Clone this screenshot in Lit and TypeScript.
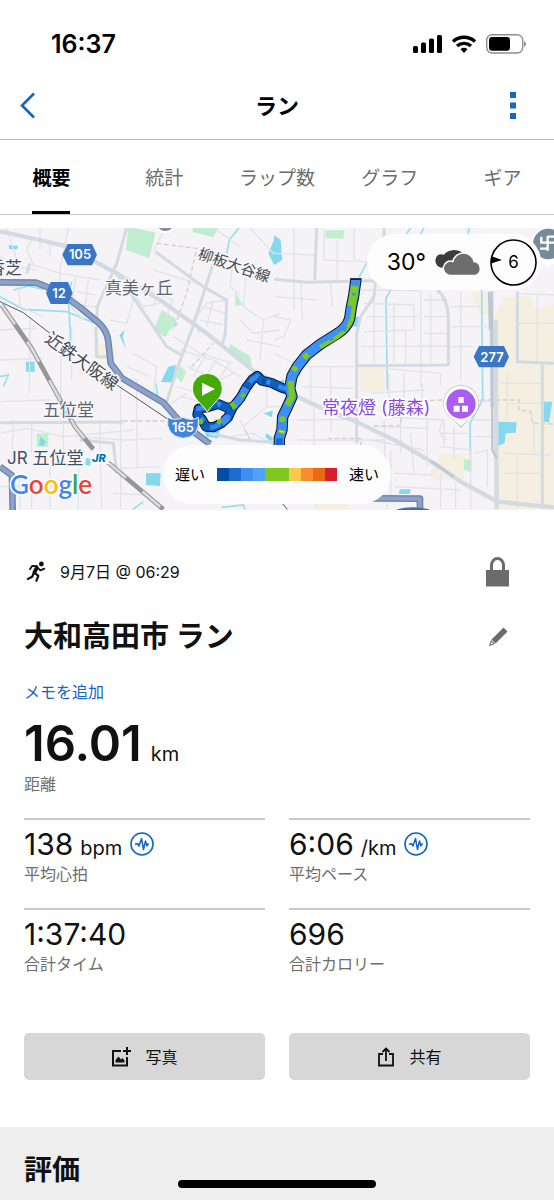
import { LitElement, html, css, svg } from "lit";
import { customElement, property, state } from "lit/decorators.js";

interface Metric {
  value: string;
  unit: string;
  label: string;
  pulse: boolean;
}

const METRICS: Metric[] = [
  { value: "138", unit: "bpm", label: "平均心拍", pulse: true },
  { value: "6:06", unit: "/km", label: "平均ペース", pulse: true },
  { value: "1:37:40", unit: "", label: "合計タイム", pulse: false },
  { value: "696", unit: "", label: "合計カロリー", pulse: false },
];

const TABS = ["概要", "統計", "ラップ数", "グラフ", "ギア"];

const PACE_COLORS = [
  "#034ea2", "#1a6cd3", "#3f8fef", "#4fa0ff", "#7fc81e",
  "#7fc81e", "#fdc84b", "#f98c2b", "#ea6a12", "#d81e2a",
];

const NORTH_ROUTE =
  "M1068 178L1061 228L1054 262L1049 296Q1040 325 1010 342L962 372L920 404L892 440L876 468L869 505L876 530L860 565L848 590L846 630L838 655L838 684";
const WEST_ROUTE =
  "M867 510L845 503L815 489L785 482L772 468L757 478L738 504L722 533L700 560L684 564L655 552L620 562L596 566L592 584L606 598L618 620L640 622L664 610L684 592L698 562";

@customElement("course-map")
export class CourseMap extends LitElement {
  static styles = css`
    :host { display: block; height: 282px; overflow: hidden; }
    .map { display: block; width: 100%; height: 100%; background: #f5f3f6; }
    text { font-family: "Inter", "Noto Sans CJK JP", sans-serif; }
    .minor { fill: none; stroke: #e0e3ea; stroke-width: 4; }
    .road { fill: none; stroke: #d3dae2; stroke-width: 9; stroke-linejoin: round; }
    .wide { stroke-width: 13; }
    .trunk-edge { fill: none; stroke: #6c83ad; stroke-width: 20; stroke-linejoin: round; }
    .trunk { fill: none; stroke: #8da2c8; stroke-width: 12; stroke-linejoin: round; }
    .park { fill: #c0ecd0; }
    .water { fill: #87d8ed; }
    .stream { fill: none; stroke: #9adfee; stroke-width: 5; }
    .sand { fill: #f5efe1; }
    .dash { fill: none; stroke: #d0cfd2; stroke-width: 4; stroke-dasharray: 14 8; }
    .rail { fill: none; stroke: #969698; stroke-width: 14; }
    .rail-gap { fill: none; stroke: #dcdcdf; stroke-width: 8; stroke-dasharray: 70 64; }
    .line { fill: none; stroke: #56565a; stroke-width: 3; }
    .route-edge { fill: none; stroke: #061426; stroke-width: 34; stroke-linejoin: round; }
    .route { fill: none; stroke: #3f90f4; stroke-width: 28; stroke-linejoin: round; }
    .thin-edge { stroke-width: 30; }
    .deep { stroke: #0d5fbd; stroke-width: 24; }
    .bright { stroke: #3f90f4; stroke-width: 22; }
    .fleck { fill: none; stroke-width: 14; }
    .name { font-size: 17px; fill: #5c6670; stroke: #f7f6f9; stroke-width: 3px; paint-order: stroke; }
    .rail-name { fill: #45494f; }
    .small { font-size: 15px; }
    .station { fill: #3d5166; }
    .shield { font-size: 13px; font-weight: 600; fill: #fff; text-anchor: middle; }
    .spot { font-size: 18px; fill: #8a4bdc; stroke: #fff; stroke-width: 3px; paint-order: stroke; }
    .logo { font-family: "Lato", sans-serif; font-size: 26px; font-weight: 600; stroke: #fff; stroke-width: 3px; paint-order: stroke; }
    .jr { font-size: 11px; font-weight: 800; font-style: italic; fill: #0073bd; stroke: #fff; stroke-width: 4px; paint-order: stroke; }
  `;

  private west() {
    return svg`
      <path class="sand" d="M285 370L350 375L350 415L300 418ZM232 440L330 448L330 462L232 466Z" />
      <path class="park" d="M385 20L466 38L448 115L378 90ZM578 22L655 22L640 52L578 36ZM486 270L525 295L535 315L508 330L496 352L462 326ZM690 372L752 410L755 445L686 402ZM706 216L728 255L706 258ZM540 438L558 455L545 488L528 470ZM110 642L145 640L145 680L110 680Z" />
      <path class="water" d="M505 440L528 435L520 487L483 486ZM25 76L55 78L50 88L28 88ZM78 425L104 425L104 455L78 455ZM375 330L368 350L378 388L358 345ZM438 760L482 760L480 798L438 795ZM615 632L660 628L655 655L618 650ZM122 650L138 665L130 678L116 676ZM805 100L822 60L822 135ZM790 580L818 572L816 592ZM800 640L820 655L812 666L796 650ZM258 714L275 716L270 738L256 734Z" />
      <path class="stream" d="M0 230L70 268L200 275L290 312M215 185L205 225L212 370M40 210L85 198L130 208M718 22L688 60L680 100M0 470L25 465L10 500M398 868L430 846M665 862L730 855L735 868M468 490L474 545" />
      <path class="minor" d="M95 60L80 90L100 135L180 160L300 180M205 24L180 150L180 210M110 60L215 90L300 130M120 24L120 90M150 70L150 110M20 24L60 150M0 110L50 140L110 150M55 185L60 260L130 290M228 170L214 260L250 300M230 215L285 225M240 255L290 262M265 180L250 300M0 330L110 325M90 290L88 520M182 400L182 600M0 420L130 415M0 545L150 540M215 320L215 480M362 500L362 868M300 480L410 480L410 640M0 640L80 625L190 650L400 630M40 600L35 740M95 610L95 700M190 610L190 690M300 600L300 690M225 650L380 660L490 655M300 690L305 868M360 745L480 740M340 820L440 825M235 745L235 868M95 800L95 868M150 740L150 868M60 760L60 868M0 800L240 800M410 600L412 745M460 90L500 20M460 150L590 190M420 200L520 240M350 150L430 260L480 250M400 240L380 310L330 300M480 200L460 260M520 240L495 300M590 100L680 130M700 120L690 200L720 225M740 150L730 260L790 300L840 280M650 30L720 80M750 24L830 110M520 350L600 400L700 430M540 390L640 420L720 470M560 440L660 480L700 460M580 470L620 400M610 480L650 420M640 500L690 430M530 500L600 520L590 560M500 560L560 520M545 530L620 550M400 400L470 440L460 520M380 440L450 470M600 340L580 300L620 250L680 240M610 260L680 280M600 300L670 315M640 240L620 320M720 300L760 340L840 330M740 360L840 380M790 300L780 420M720 600L750 660M690 650L760 640L830 680M730 620L800 560M800 500L800 560L840 560" />
      <path class="dash" d="M470 70L590 85L560 220L520 330M575 440L640 370M370 603L510 603M735 630L750 660" />
      <path class="road" d="M380 24L350 130L292 260L290 310M466 95L610 200L680 240L676 340L665 380M640 130L575 330L530 450L497 555M350 160L440 290L500 380L545 405M80 160L90 130M0 608L370 606M630 640L720 660L840 668M288 320L290 410L330 410M240 660L340 670L350 760" />
      <path class="road wide" d="M0 34L200 78L350 160L480 240L620 340L770 460L840 490" />
      <path class="trunk-edge" d="M0 187L108 188L175 214L240 262L292 305Q322 330 325 365L332 430L365 474L490 548L540 605L630 672M0 740L36 766L38 870" />
      <path class="trunk" d="M0 187L108 188L175 214L240 262L292 305Q322 330 325 365L332 430L365 474L490 548L540 605L630 672M0 740L36 766L38 870" />
      <path class="line" d="M0 245L70 278L150 340M340 488L510 602" />
      <path class="rail" d="M5 255L95 385L150 485L225 620L280 688M325 728L490 868" />
      <path class="rail-gap" d="M5 255L95 385L150 485L225 620L280 688M325 728L490 868" />
    `;
  }

  private east() {
    return svg`
      <path class="sand" d="M655 300L690 235L770 225L780 270L840 250L840 868L670 868L670 700L655 640ZM590 220L650 220L650 290L620 280ZM255 445L332 442L332 515L258 515ZM500 700L575 705L570 780L480 780L465 760ZM120 825L220 830L225 868L120 868Z" />
      <path class="park" d="M155 32L212 30L208 56L155 55ZM570 718L592 720L590 758L570 748Z" />
      <path class="water" d="M0 45L20 60L25 120L0 135ZM228 290L255 290L250 320L228 318ZM672 605L728 607L725 638L695 640L692 670L672 678ZM810 545L835 545L825 608L806 604ZM378 808L410 808L408 822L374 822ZM0 485L30 480L30 500L0 500Z" />
      <path class="stream" d="M288 112L255 172M410 24L385 60M450 24L430 60M353 205L336 235L340 510M585 24L580 60M623 210L626 540L588 610L590 755" />
      <path class="minor" d="M60 24L60 270M0 100L120 105M0 230L130 240M0 290L50 300L30 350L0 360M80 180L85 300M170 190L175 260M150 24L150 120L240 125M190 60L190 180M240 24L240 120L290 130M0 400L60 430M100 440L240 440M110 440L110 540M170 440L172 640M85 500L240 505M70 600L240 598M70 660L330 660M120 560L120 680M260 210L440 212M270 250L420 255L420 330L270 335M300 210L300 430M360 250L360 430M395 330L395 430M440 210L440 500M280 290L430 290M450 240L520 240M450 290L520 290M450 340L520 340M260 380L520 378M470 220L470 430M560 215L560 480M530 260L620 260M530 320L640 320M530 380L600 380M445 490L445 600M330 445L500 460L500 490M345 460L345 560M390 460L390 540M290 520L450 510M330 590L510 600L510 680M380 580L380 700M300 620L460 625M290 660L450 690M330 600L335 760M410 640L420 760M460 580L460 740M500 640L590 640M500 680L590 690L590 868M540 620L540 720M350 690L350 840M280 700L280 830M360 760L480 765M360 800L560 810M500 760L500 868M545 790L545 868M600 540L660 545M600 600L660 600M600 650L660 650M600 700L640 690L640 800M690 700L830 705M690 760L800 760M730 700L730 868M780 600L780 700M700 550L800 550M680 490L800 490M730 220L840 225M790 220L790 430M730 310L840 310M640 420L660 420M700 460L700 600M510 600Q480 640 520 660M340 850L340 868M430 840L430 868" />
      <path class="dash" d="M380 545L505 540M620 540L735 540L735 570L770 575L775 610L840 612M300 617L380 617L380 580M160 655L260 655L260 680M15 570L60 555" />
      <path class="road" d="M128 24L122 180M0 178L100 187L305 182L300 230L260 290L248 340L248 670M250 437L523 435L523 290Q520 235 490 210M330 24L330 60M730 215L730 425L840 430M805 430L805 868M235 720L230 840" />
      <path class="road wide" d="M70 530L145 565L240 602L370 665L480 730L560 785L670 845L840 862M665 300L668 868M652 215L655 560" />
      <path class="line" d="M0 820L40 868" />
      <path fill="none" stroke="#bcc7d2" stroke-width="7" d="M653 215L655 690L668 715M645 215L648 330M470 722L540 770" />
      <path class="trunk-edge" d="M290 835L438 836L438 870" />
      <path class="trunk" d="M290 835L438 836L438 870" />
      <path fill="#4a68ad" d="M370 868Q415 856 465 868V872H370Z" />
    `;
  }

  private course() {
    return svg`
      <path class="route-edge thin-edge" d=${WEST_ROUTE} />
      <path class="route-edge" d=${NORTH_ROUTE} />
      <path class="route deep" d=${WEST_ROUTE} />
      <path class="fleck" stroke="#3488ee" stroke-dasharray="34 26 12 30" d=${WEST_ROUTE} />
      <path class="fleck" stroke="#0a4fa0" stroke-dasharray="10 66" d=${WEST_ROUTE} />
      <path class="route bright" d="M738 504L722 533L700 560M684 592L664 610" />
      <path class="fleck" stroke="#72c31f" d="M724 522L734 530M694 548L706 566M600 598L604 612M652 602L664 608" />
      <path class="route" d=${NORTH_ROUTE} />
      <path fill="none" stroke="#7fc81e" stroke-width="24" d="M1065 198L1058 240L1055 258" />
      <path fill="none" stroke="#7fc81e" stroke-width="12" d="M1061 256L1056 296Q1045 328 1014 350L960 382" />
      <path fill="none" stroke="#7fc81e" stroke-width="18" d="M924 402L912 414M888 440L880 452M872 482L876 530L862 556M848 590L846 606M846 630L842 640" />
      <path fill="none" stroke="#3f90f4" stroke-width="8" d="M1056 222L1066 224M1040 320L1030 334M1000 354L990 360" />
      <path fill="none" stroke="#fdc84b" stroke-width="4" d="M838 634L854 636" />
      <path fill="none" stroke="#1769cf" stroke-width="20" d="M838 655V684" />
      <path fill="none" stroke="#061426" stroke-width="5" d="M1051 177H1085" />
      <path d="M636 582L666 576L662 596L640 602Z" fill="#f7f2f0" />
      <path d="M622 576C604 548 577 536 577 505A45 45 0 0 1 667 505C667 536 640 548 622 576Z" fill="#46aa06" stroke="#fff" stroke-width="3" />
      <path d="M606 488L645 507L606 527Z" fill="#fff" />
    `;
  }

  private markers() {
    return svg`
      <path d="M203 72H276L291 104L276 136H203L187 104Z" fill="#3b76c6" />
      <path d="M152 186H204L218 219L204 252H152L138 219Z" fill="#3b76c6" />
      <path d="M1437 378H1512L1527 410L1512 442H1437L1421 410Z" fill="#3b76c6" />
      <path d="M503 592Q525 604 549 592Q572 604 595 592Q602 652 549 655Q496 648 503 592Z" fill="#4384d6" stroke="#e7eefa" stroke-width="3" />
      <circle cx="1642" cy="80" r="54" fill="#fff" />
      <path d="M1615 112L1642 142L1662 132V100Z" fill="#fff" />
      <circle cx="1645" cy="72" r="46" fill="#768b99" />
      <path d="M1624 50V68H1662M1643 48V92M1620 86H1643M1662 50H1643" fill="none" stroke="#fff" stroke-width="7" />
      <path d="M470 20A28 26 0 0 0 522 20Z" fill="#888d93" stroke="#fff" stroke-width="7" />
      <path d="M1383 624Q1370 607 1350 592A54 54 0 1 1 1416 592Q1396 607 1383 624Z" fill="#b3b3ba" opacity=".7" />
      <path d="M1383 619Q1370 604 1350 590A52 52 0 1 1 1416 590Q1396 604 1383 619Z" fill="#fff" />
      <circle cx="1383" cy="552" r="44" fill="#ab5cf5" />
      <path d="M1375 531H1391V549H1375ZM1361 557H1379V575H1361ZM1386 557H1404V575H1386Z" fill="#fff" />
    `;
  }

  render() {
    return html`
      <svg class="map" viewBox="0 0 554 282" preserveAspectRatio="xMidYMid slice" role="img" aria-label="ランのコース">
        <g transform="translate(0 -8) scale(.33333)">
          ${this.west()}
          <g transform="translate(822 0)">${this.east()}</g>
          ${this.course()} ${this.markers()}
        </g>
        <text class="shield" x="80" y="31">105</text>
        <text class="shield" x="59" y="70">12</text>
        <text class="shield" x="183" y="204">165</text>
        <text class="shield" x="492" y="134">277</text>
        <text class="name station" x="-12" y="46">香芝</text>
        <text class="name" x="105" y="66">真美ヶ丘</text>
        <text class="name" x="43" y="188">五位堂</text>
        <text class="name rail-name small" transform="translate(197 30) rotate(19)">柳板大谷線</text>
        <text class="name rail-name" transform="translate(44 113) rotate(36)">近鉄大阪線</text>
        <text class="name station" x="7" y="236">JR 五位堂</text>
        <text class="jr" x="92" y="234">JR</text>
        <text class="spot" x="322" y="186">常夜燈 (藤森)</text>
        <text class="logo" x="10" y="266"><tspan fill="#4285f4">G</tspan><tspan fill="#ea4335">o</tspan><tspan fill="#fbbc05">o</tspan><tspan fill="#4285f4">g</tspan><tspan fill="#34a853">l</tspan><tspan fill="#ea4335">e</tspan></text>
      </svg>
    `;
  }
}

@customElement("metric-cell")
export class MetricCell extends LitElement {
  @property({ attribute: false }) metric!: Metric;

  static styles = css`
    :host { display: block; border-top: 2px solid #c9c9c9; padding-top: 6px; min-height: 90px; }
    .figure { display: flex; align-items: center; gap: 8px; height: 36px; }
    .reading { display: flex; align-items: baseline; gap: 7px; }
    .value { font-size: 30px; line-height: 36px; color: #111; }
    .unit { font-size: 20px; line-height: 24px; }
    .label { font-size: 16px; line-height: 24px; color: #6e6e6e; }
    .pulse { width: 24px; height: 24px; fill: none; stroke: #1565c8; }
  `;

  render() {
    const m = this.metric;
    return html`
      <div class="figure">
        <span class="reading"><span class="value">${m.value}</span>${m.unit ? html`<span class="unit">${m.unit}</span>` : ""}</span>
        ${m.pulse
          ? html`<svg class="pulse" viewBox="0 0 24 24" aria-hidden="true">
              <circle cx="12" cy="12" r="11" stroke-width="1.6" />
              <path stroke-width="1.5" stroke-linejoin="round" d="M5 12.5L7.5 11.5L9 14L11.5 6.5L13.5 17.5L15.5 9L17 14L18 12H19" />
            </svg>`
          : ""}
      </div>
      <div class="label">${m.label}</div>
    `;
  }
}

@customElement("app-root")
export class AppRoot extends LitElement {
  @state() private tab = 0;

  static styles = css`
    :host {
      display: block; position: relative; min-height: 100vh; overflow: hidden;
      background: #fff; color: #111;
      font-family: "Inter", "Noto Sans CJK JP", sans-serif;
    }
    * { box-sizing: border-box; }
    button { font: inherit; color: inherit; background: none; border: 0; padding: 0; cursor: pointer; }
    h1, h2, p { margin: 0; }
    svg { display: block; }
    .status { display: flex; justify-content: space-between; align-items: center; height: 72px; padding: 16px 28px 0 51px; color: #000; }
    .clock { font-size: 25px; line-height: 28px; font-weight: 600; }
    .nav { display: grid; grid-template-columns: 64px 1fr 64px; align-items: center; height: 68px; border-bottom: 1px solid #bdbdbd; }
    .nav-title { font-size: 22px; line-height: 28px; font-weight: 700; text-align: center; color: #000; }
    .back { padding-left: 20px; justify-self: start; }
    .more { justify-self: end; padding-right: 38px; }
    .tabs { display: grid; grid-template-columns: repeat(5, 1fr); margin: 0 -5px; height: 75px; border-bottom: 1px solid #c8c8c8; margin-bottom: 13px; }
    .tab { justify-self: center; font-size: 19px; color: #6b6b6b; border-bottom: 3px solid transparent; padding-top: 2px; white-space: nowrap; }
    .tab.on { color: #000; font-weight: 700; border-color: #000; }
    .course { position: relative; }
    .weather {
      position: absolute; top: 6px; right: 13px; height: 56px; border-radius: 28px;
      display: flex; align-items: center; gap: 8px; padding: 0 4px 0 20px; background: #fdfdfd; color: #000;
    }
    .temp { font-size: 23px; line-height: 28px; }
    .wind { position: relative; display: grid; place-items: center; font-size: 17px; }
    .wind > * { grid-area: 1 / 1; }
    .legend {
      position: absolute; bottom: 6px; left: 50%; transform: translateX(-50%);
      display: flex; align-items: center; gap: 12px; height: 59px; padding: 0 12px; border-radius: 30px;
      background: #fdfdfd; font-size: 15px; line-height: 20px; white-space: nowrap; color: #000;
    }
    .scale { display: grid; grid-template-columns: repeat(10, 12px); height: 13px; }
    .summary { padding: 46px 24px 47px; }
    .row { display: flex; align-items: center; justify-content: space-between; }
    .meta { height: 32px; padding-right: 20px; }
    .when { display: flex; align-items: center; gap: 12px; font-size: 16px; line-height: 24px; }
    .heading { height: 40px; margin-top: 29px; padding-right: 22px; }
    .heading h1 { font-size: 29px; line-height: 40px; font-weight: 700; }
    .memo { display: block; width: fit-content; margin-top: 23px; font-size: 16px; line-height: 24px; color: #1565c8; text-decoration: none; }
    .distance { display: flex; align-items: baseline; gap: 9px; margin-top: 12px; line-height: 56px; height: 56px; }
    .big { font-size: 49px; font-weight: 600; }
    .unit { font-size: 20px; }
    .label { font-size: 16px; line-height: 24px; color: #6e6e6e; }
    .metrics { display: grid; grid-template-columns: 1fr 1fr; column-gap: 24px; margin-top: 22px; }
    .actions { display: grid; grid-template-columns: 1fr 1fr; gap: 24px; margin-top: 35px; }
    .action { display: flex; align-items: center; justify-content: center; gap: 14px; height: 47px; border-radius: 5px; background: #d7d7d7; font-size: 16px; line-height: 24px; }
    .rating { background: #eee; padding: 25px 24px 12px; }
    .rating h2 { font-size: 28px; line-height: 36px; font-weight: 700; }
    .home { position: absolute; left: 50%; bottom: 12px; width: 198px; height: 8px; margin-left: -99px; border-radius: 4px; background: #000; }
  `;

  render() {
    return html`
      <div class="status">
        <span class="clock">16:37</span>
        <svg width="114" height="20" viewBox="0 0 114 20" aria-hidden="true">
          <rect x="1" y="12" width="5" height="7" rx="1.5" />
          <rect x="9" y="8.5" width="5" height="10.5" rx="1.5" />
          <rect x="17" y="4.5" width="5" height="14.5" rx="1.5" />
          <rect x="25" y="1" width="5" height="18" rx="1.5" />
          <g fill="none" stroke="#000" stroke-width="3.4">
            <path d="M41 7.5A16.5 16.5 0 0 1 63 7.5" />
            <path d="M45 12A10.5 10.5 0 0 1 59 12" />
          </g>
          <path d="M48.5 15.3A5.5 5.5 0 0 1 55.5 15.3L52 19Z" />
          <rect x="74.7" y=".7" width="36" height="18.3" rx="5.5" fill="none" stroke="#8e8e8e" stroke-width="1.4" />
          <rect x="77" y="3" width="21" height="13.7" rx="3" />
          <path d="M112 7Q114 8 114 10T112 13Z" fill="#8e8e8e" />
        </svg>
      </div>
      <header class="nav">
        <button class="back" aria-label="戻る">
          <svg width="15" height="28" viewBox="0 0 15 28" fill="none" stroke="#1565c0" stroke-width="2.6"><path d="M14 1.5L2 13.5L14 25.5" /></svg>
        </button>
        <div class="nav-title">ラン</div>
        <button class="more" aria-label="メニュー">
          <svg width="6" height="27" viewBox="0 0 6 27" fill="#1b66c4"><path d="M0 0H6V6H0ZM0 10.5H6V16.5H0ZM0 21H6V27H0Z" /></svg>
        </button>
      </header>
      <nav class="tabs" role="tablist">
        ${TABS.map((t, i) => html`<button class="tab ${i === this.tab ? "on" : ""}" role="tab" aria-selected=${i === this.tab} @click=${() => (this.tab = i)}>${t}</button>`)}
      </nav>
      <section class="course">
        <course-map></course-map>
        <div class="weather">
          <span class="temp">30°</span>
          <svg width="48" height="28" viewBox="0 0 46 27" aria-hidden="true">
            <path fill="#3c3c3c" d="M7 19A7 7 0 0 1 4 6.500Q7 5.500 9.500 6.500A11 8.500 0 0 1 27 4.500L16 14L10 19Z" />
            <path fill="#6d6d6d" stroke="#fdfdfd" stroke-width="1.5" d="M14.500 26.500A7 7 0 0 1 9 18A7 7 0 0 1 18 13A10.500 10.500 0 0 1 38.500 13A7 7 0 0 1 40 26.500Z" />
          </svg>
          <span class="wind">
            <svg width="47" height="47" viewBox="0 0 47 47" aria-hidden="true">
              <circle cx="23.5" cy="23.5" r="22.5" fill="none" stroke="#000" stroke-width="1.6" />
              <path d="M1 17L12 21L1 24.5Z" />
            </svg>
            <span>6</span>
          </span>
        </div>
        <div class="legend">
          <span>遅い</span>
          <span class="scale">${PACE_COLORS.map((c) => html`<i style="background:${c}"></i>`)}</span>
          <span>速い</span>
        </div>
      </section>
      <main class="summary">
        <div class="row meta">
          <div class="when">
            <svg width="24" height="24" viewBox="0 0 24 24" aria-hidden="true">
              <circle cx="17.4" cy="4" r="2.4" fill="#111" />
              <g fill="none" stroke="#111" stroke-linecap="round" stroke-linejoin="round">
                <path stroke-width="3.8" d="M12.8 7.6L10.4 12.4" />
                <path stroke-width="1.8" d="M13 6.2L8.3 5.8L6 9.3M13.800 8L16.4 10.4L20.3 8.6" />
                <path stroke-width="2.2" d="M11 13.2L14.300 15.8L12.4 20.8M9.800 13L8.2 16.8L3.8 18.9" />
              </g>
            </svg>
            <span>9月7日 @ 06:29</span>
          </div>
          <svg width="24" height="30" viewBox="0 0 24 30" role="img" aria-label="非公開">
            <path fill="#6b6b6b" d="M0 13H23V29.5H0Z" />
            <path fill="none" stroke="#6b6b6b" stroke-width="3" d="M5.5 14V8A6 6.5 0 0 1 17.5 8V14" />
          </svg>
        </div>
        <div class="row heading">
          <h1>大和高田市 ラン</h1>
          <button aria-label="編集">
            <svg width="20" height="20" viewBox="0 0 20 20" fill="#6b6b6b">
              <path d="M15 1Q15.500 .6 16 1L19 4Q19.400 4.500 19 5L7.500 16.500L3.500 12.500ZM3 13L7 17L.8 19.300ZM3.400 14.800L2.600 17.400L5.200 16.600Z" fill-rule="evenodd" />
            </svg>
          </button>
        </div>
        <a class="memo" href="#memo">メモを追加</a>
        <p class="distance"><span class="big">16.01</span><span class="unit">km</span></p>
        <p class="label">距離</p>
        <div class="metrics">${METRICS.map((m) => html`<metric-cell .metric=${m}></metric-cell>`)}</div>
        <div class="actions">
          <button class="action">
            <svg width="20" height="20" viewBox="0 0 20 20" fill="none" stroke="#111" stroke-width="2">
              <path d="M10 4H2V18.5H16V10M16 0V8M12 4H20" />
              <path d="M4.500 15.500V13L7.500 9.500L10 12.500L11.500 11L13.500 13.500V15.500Z" fill="#111" stroke="none" />
            </svg>
            <span>写真</span>
          </button>
          <button class="action">
            <svg width="18" height="20" viewBox="0 0 18 20" fill="none" stroke="#111" stroke-width="1.8">
              <path d="M6 7H2V18.5H16V7H12M9 14V2M5.5 5L9 1.5L12.5 5" />
            </svg>
            <span>共有</span>
          </button>
        </div>
      </main>
      <section class="rating"><h2>評価</h2></section>
      <div class="home"></div>
    `;
  }
}
